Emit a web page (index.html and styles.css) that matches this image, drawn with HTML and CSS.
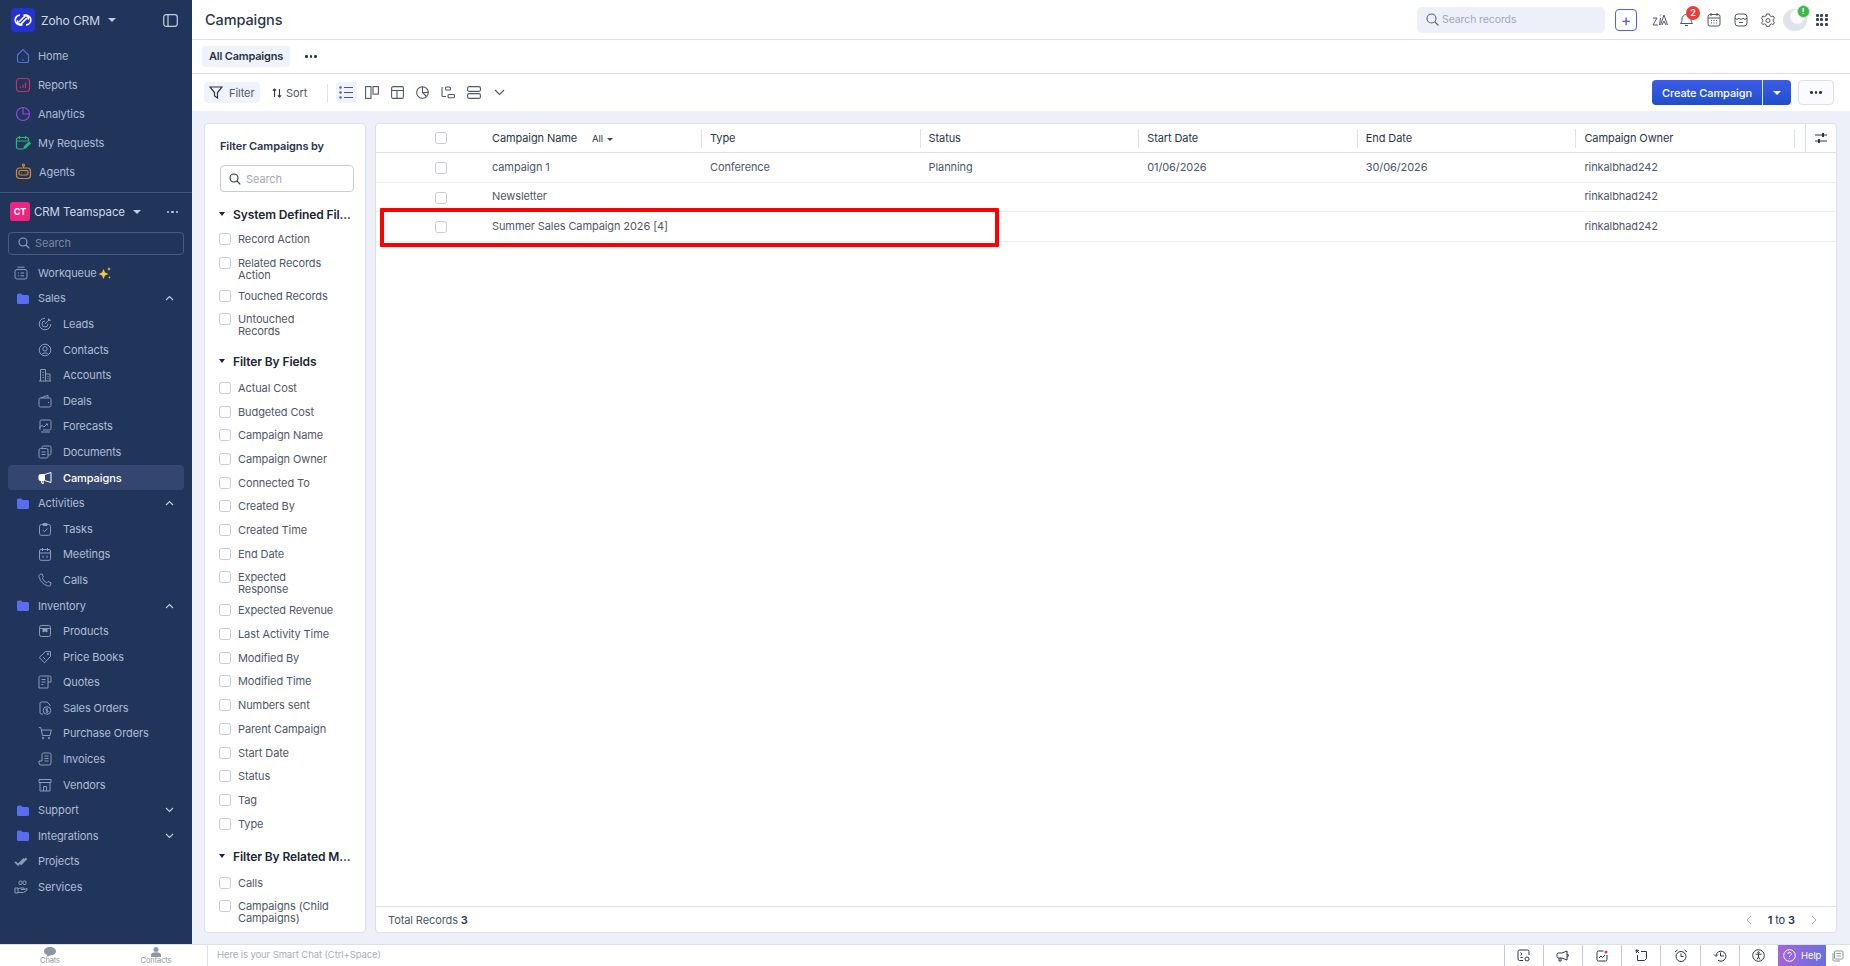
FILE: index.html
```html
<!DOCTYPE html>
<html lang="en">
<head>
  <meta charset="UTF-8" />
  <title>Campaigns - Zoho CRM</title>
  <link rel="stylesheet" href="styles.css">
</head>
<body>
  <div class="app">
    <aside class="sidebar">
      <div class="brand">
        <div class="brand-logo">
          <svg width="20" height="14" viewBox="0 0 20 14" fill="none" stroke="#fff" stroke-width="1.7"><path d="M7 2.2a4.8 4.8 0 1 0 0 9.6h2.5"/><path d="M13 11.8a4.8 4.8 0 1 0 0-9.6h-2.5"/><path d="M6 9l6-6a2.4 2.4 0 0 1 3 3.5"/><path d="M14 5l-6 6a2.4 2.4 0 0 1-3-3.5"/></svg>
        </div>
        <span class="brand-name">Zoho CRM</span>
        <span class="caret caret-side"></span>
        <svg class="brand-panel" width="15" height="13" viewBox="0 0 15 13" fill="none" stroke="#c3cde0" stroke-width="1.2"><rect x=".7" y=".7" width="13.6" height="11.6" rx="2.5"/><path d="M5 .7v11.6"/></svg>
      </div>

      <nav class="nav-top">
        <a class="nav-item"><svg width="16" height="16" viewBox="0 0 16 16" fill="none" stroke="#4f6fe0" stroke-width="1.2"><path d="M2.5 7 8 1.5 13.5 7v5.5a2 2 0 0 1-2 2h-7a2 2 0 0 1-2-2z"/><path d="M7 12h2"/></svg>Home</a>
        <a class="nav-item"><svg width="16" height="16" viewBox="0 0 16 16" fill="none" stroke="#c2306e" stroke-width="1.2"><rect x="1.5" y="1.5" width="13" height="13" rx="3"/><path d="M5.5 11V9.5M8 11V7.5M10.5 11V5.5"/></svg>Reports</a>
        <a class="nav-item"><svg width="16" height="16" viewBox="0 0 16 16" fill="none" stroke="#9a45e0" stroke-width="1.2"><circle cx="8" cy="8" r="6.5"/><path d="M8 1.5V8h6.5"/></svg>Analytics</a>
        <a class="nav-item"><svg width="16" height="16" viewBox="0 0 16 16" fill="none" stroke="#29b57c" stroke-width="1.2"><path d="M8 14H3.5a2 2 0 0 1-2-2V4.5a2 2 0 0 1 2-2h8a2 2 0 0 1 2 2V6"/><path d="M1.5 6h12M4.5 1v3M10.5 1v3"/><path d="m9 13.5.5-2L14 7l1.3 1.3-4.500 4.500z" fill="#29b57c"/></svg>My Requests</a>
        <a class="nav-item"><svg width="17" height="17" viewBox="0 0 17 17" fill="none" stroke="#d48a27" stroke-width="1.2"><rect x="1.5" y="5" width="14" height="10.5" rx="3"/><path d="M8.5 5V3"/><circle cx="8.5" cy="2" r="1"/><rect x="4" y="7.5" width="9" height="4.5" rx="1.5"/><path d="M6.5 9.5v.5M10.5 9.5v.5"/></svg>Agents</a>
      </nav>

      <div class="teamspace">
        <span class="teamspace-badge">CT</span>
        <span class="teamspace-name">CRM Teamspace</span>
        <span class="caret caret-side"></span>
        <span class="dots dots-side"><i></i><i></i><i></i></span>
      </div>

      <div class="side-search">
        <svg width="12" height="12" viewBox="0 0 12 12" fill="none" stroke="#98a6c2" stroke-width="1.1"><circle cx="5" cy="5" r="4"/><path d="m8 8 3.3 3.3"/></svg>
        <span>Search</span>
      </div>

      <nav class="nav-tree">
        <a class="tree-item"><svg class="ic-top" width="14" height="14" viewBox="0 0 14 14"><rect x="1" y="3.5" width="12" height="9.5" rx="2"/><path d="M3.5 1.2h7M4 7h1M6.5 7H10M4 9.8h1M6.5 9.8H10"/></svg><span>Workqueue</span><svg class="sparkle" width="14" height="14" viewBox="0 0 14 14"><path fill="#f5c542" d="M5.5 3 7 6.5 10.5 8 7 9.5 5.5 13 4 9.5.5 8 4 6.5z"/><path fill="#f5c542" d="M11 1l.6 1.4L13 3l-1.4.6L11 5l-.6-1.4L9 3l1.4-.6zM11.5 10l.4 1 1 .4-1 .4-.4 1-.4-1-1-.4 1-.4z"/></svg></a>

        <a class="tree-folder"><svg width="12" height="11" viewBox="0 0 12 11"><path fill="#5a6cf0" d="M0 2A1.5 1.5 0 0 1 1.5.5h2.7L5.5 2h5A1.5 1.5 0 0 1 12 3.5v6a1.500 1.500 0 0 1-1.500 1.500h-9A1.500 1.500 0 0 1 0 9.500z"/></svg><span>Sales</span><svg class="chev" width="9" height="6" viewBox="0 0 9 6"><path d="m1 5 3.5-3.5L8 5"/></svg></a>
        <a class="tree-sub"><svg width="14" height="14" viewBox="0 0 14 14"><path d="M12.8 7A5.800 5.800 0 1 1 7 1.200"/><path d="M10 7a3 3 0 1 1-3-3"/><path d="m7 7 5-5M10.5 1.5v2h2"/></svg>Leads</a>
        <a class="tree-sub"><svg width="14" height="14" viewBox="0 0 14 14"><circle cx="7" cy="7" r="5.8"/><circle cx="7" cy="5.8" r="2.2"/><path d="M3.5 11.5c1-2 6-2 7 0"/></svg>Contacts</a>
        <a class="tree-sub"><svg width="14" height="14" viewBox="0 0 14 14"><path d="M1 13h12M2.5 13V1.500h5V13M7.5 6H12v7M4.3 4.500h1.500M4.300 7h1.500M4.300 9.500h1.500M9.500 8.500h1M9.500 10.500h1"/></svg>Accounts</a>
        <a class="tree-sub"><svg width="14" height="14" viewBox="0 0 14 14"><path d="M2.5 4 10 1.3V4M2.5 4h9A1.500 1.500 0 0 1 13 5.500v6a1.500 1.500 0 0 1-1.500 1.500h-9A1.500 1.500 0 0 1 1 11.500v-6A1.500 1.500 0 0 1 2.500 4zM10 8.500h1"/></svg>Deals</a>
        <a class="tree-sub"><svg width="14" height="14" viewBox="0 0 14 14"><path d="M2 11V2.500A1.500 1.500 0 0 1 3.500 1h8A1.500 1.500 0 0 1 13 2.500v7A1.500 1.500 0 0 1 11.500 11H5M1 9l3-2.500 2 1.500 3-3M8 5h1.500v1.500M3 13h9"/></svg>Forecasts</a>
        <a class="tree-sub"><svg width="14" height="14" viewBox="0 0 14 14"><rect x="1" y="3.5" width="9" height="9.5" rx="1.5"/><path d="M4 3.500v-1A1.500 1.500 0 0 1 5.500 1h6A1.500 1.500 0 0 1 13 2.500v6A1.500 1.500 0 0 1 11.500 10H10M3.500 7h4M3.500 9.500h4"/></svg>Documents</a>
        <a class="tree-sub is-active"><svg width="14" height="14" viewBox="0 0 14 14"><path d="M13 1.500v10l-6.500-2h-4A1.500 1.500 0 0 1 1 8V5a1.500 1.500 0 0 1 1.500-1.500h4z"/><path d="M1.500 4h5v5h-5z" fill="#fff"/><path d="m3 9.500 1 3h1.500l-.7-3"/></svg>Campaigns</a>

        <a class="tree-folder"><svg width="12" height="11" viewBox="0 0 12 11"><path fill="#5a6cf0" d="M0 2A1.5 1.5 0 0 1 1.5.5h2.7L5.5 2h5A1.5 1.5 0 0 1 12 3.5v6a1.500 1.500 0 0 1-1.500 1.500h-9A1.500 1.500 0 0 1 0 9.500z"/></svg><span>Activities</span><svg class="chev" width="9" height="6" viewBox="0 0 9 6"><path d="m1 5 3.5-3.5L8 5"/></svg></a>
        <a class="tree-sub"><svg width="14" height="14" viewBox="0 0 14 14"><rect x="1.5" y="2.5" width="11" height="10.8" rx="2"/><path d="M5 1.500h4v2H5zM4.800 8l1.600 1.700 3-3.200"/></svg>Tasks</a>
        <a class="tree-sub"><svg width="14" height="14" viewBox="0 0 14 14"><rect x="1.5" y="2.5" width="11" height="10.8" rx="1.5"/><path d="M1.500 6h11M4.500 1v3M9.500 1v3M5 8.500V11M9 8.500V11"/></svg>Meetings</a>
        <a class="tree-sub"><svg width="14" height="14" viewBox="0 0 14 14"><path d="M2 1.300 4.200 1l1.300 3-1.300 1.200a9 9 0 0 0 4.600 4.600L10 8.500l3 1.300-.3 2.200C12.500 13 11 13.300 9.500 12.800 5.500 11.500 2.500 8.500 1.200 4.500.7 3 1 2 2 1.300z"/></svg>Calls</a>

        <a class="tree-folder"><svg width="12" height="11" viewBox="0 0 12 11"><path fill="#5a6cf0" d="M0 2A1.5 1.5 0 0 1 1.5.5h2.7L5.5 2h5A1.5 1.5 0 0 1 12 3.5v6a1.500 1.500 0 0 1-1.500 1.500h-9A1.500 1.500 0 0 1 0 9.500z"/></svg><span>Inventory</span><svg class="chev" width="9" height="6" viewBox="0 0 9 6"><path d="m1 5 3.5-3.5L8 5"/></svg></a>
        <a class="tree-sub"><svg width="14" height="14" viewBox="0 0 14 14"><rect x="1.5" y="1.5" width="11" height="11" rx="2"/><path d="M1.500 4.500h11"/><path d="M5 4.500h4V8L7 7 5 8z" fill="#8c9bb9"/></svg>Products</a>
        <a class="tree-sub"><svg width="14" height="14" viewBox="0 0 14 14"><path d="M7.500 1.500h5v5l-6 6.300-5.300-5.300z"/><circle cx="10" cy="4" r=".8"/><path d="m5 7 2.500 2.500"/></svg>Price Books</a>
        <a class="tree-sub"><svg width="14" height="14" viewBox="0 0 14 14"><path d="M10 7h3V2.500A1.500 1.500 0 0 0 11.500 1h-9A1.500 1.500 0 0 0 1 2.500V13h9zM10 2v5M3.500 4.500h4M3.500 7h4M3.500 9.500h2"/></svg>Quotes</a>
        <a class="tree-sub"><svg width="14" height="14" viewBox="0 0 14 14"><path d="M9 1H3.500A1.500 1.500 0 0 0 2 2.500v9A1.500 1.500 0 0 0 3.500 13H5M9 1l3 3v1"/><circle cx="9" cy="9.5" r="3.8"/><path d="M10 8.300c-.5-.6-2.200-.6-2.200.4s2.400.6 2.400 1.700-1.800 1-2.400.4M9 7.300v4.400"/></svg>Sales Orders</a>
        <a class="tree-sub"><svg width="14" height="14" viewBox="0 0 14 14"><path d="M.8 1.500h2l1.700 8H12L13.300 4h-10"/><circle cx="5" cy="12" r=".8"/><circle cx="11" cy="12" r=".8"/></svg>Purchase Orders</a>
        <a class="tree-sub"><svg width="14" height="14" viewBox="0 0 14 14"><path d="M4 9V2.500A1.500 1.500 0 0 1 5.500 1h6A1.500 1.500 0 0 1 13 2.500V11a2 2 0 0 1-2 2H3a2 2 0 0 1-2-2V9zM6.500 4h4M6.500 6.500h4M6.500 9h4"/></svg>Invoices</a>
        <a class="tree-sub"><svg width="14" height="14" viewBox="0 0 14 14"><path d="M1 1.500h12v3H1zM2 4.500V13h10V4.500M5.500 13V8.500h3V13"/></svg>Vendors</a>

        <a class="tree-folder"><svg width="12" height="11" viewBox="0 0 12 11"><path fill="#5a6cf0" d="M0 2A1.5 1.5 0 0 1 1.5.5h2.7L5.5 2h5A1.5 1.5 0 0 1 12 3.5v6a1.500 1.500 0 0 1-1.500 1.500h-9A1.500 1.500 0 0 1 0 9.500z"/></svg><span>Support</span><svg class="chev" width="9" height="6" viewBox="0 0 9 6"><path d="m1 1 3.500 3.500L8 1"/></svg></a>
        <a class="tree-folder"><svg width="12" height="11" viewBox="0 0 12 11"><path fill="#5a6cf0" d="M0 2A1.5 1.5 0 0 1 1.5.5h2.7L5.5 2h5A1.5 1.5 0 0 1 12 3.5v6a1.500 1.500 0 0 1-1.500 1.500h-9A1.500 1.500 0 0 1 0 9.500z"/></svg><span>Integrations</span><svg class="chev" width="9" height="6" viewBox="0 0 9 6"><path d="m1 1 3.500 3.500L8 1"/></svg></a>
        <a class="tree-item"><svg class="ic-top ic-fill" width="14" height="14" viewBox="0 0 14 14"><path d="m.5 8.500 1.300-1.300 2.200 2.200L9.500 4l1.300 1.300L4 12zM6 10l5.800-6.500L13.400 5 7 11.500z"/></svg><span>Projects</span></a>
        <a class="tree-item"><svg class="ic-top" width="14" height="14" viewBox="0 0 14 14"><rect x="5" y="1" width="3" height="3.5" rx="1"/><rect x="9" y="1" width="3" height="3.5" rx="1"/><path d="M1 8h3v5H1zM4 8.500 7 8h3v1.500H7M10 9.500l3-1V10l-3.500 2.500H4"/></svg><span>Services</span></a>
      </nav>
    </aside>

    <main class="main">
      <header class="topbar">
        <h1 class="page-title">Campaigns</h1>
        <div class="top-search">
          <svg width="13" height="13" viewBox="0 0 13 13" fill="none" stroke="#56647f" stroke-width="1.1"><circle cx="5.5" cy="5.5" r="4.5"/><path d="m9 9 3.500 3.500"/></svg>
          <span>Search records</span>
        </div>
        <div class="top-plus">+</div>
        <div class="top-icons">
          <svg width="16" height="14" viewBox="0 0 16 14"><path d="M1 5h4l-4 7h5M7.500 12l1-7M8 2.500l1-1M8.500 12 12 2l3.500 10M10 12l2-4 2 4"/></svg>
          <div class="bell">
            <svg width="15" height="15" viewBox="0 0 15 15"><path d="M1.500 11.500c1-1 1.500-2 1.500-4.500a4.500 4.500 0 0 1 9 0c0 2.500.5 3.500 1.500 4.500zM6 13.500h3"/></svg>
            <span class="bell-count">2</span>
          </div>
          <svg width="14" height="15" viewBox="0 0 14 15"><rect x="1" y="2.5" width="12" height="11.5" rx="2"/><path d="M1 6h12M4 1v3M10 1v3M4 8.500h1M6.500 8.500h1M9 8.500h1M4 11h1M6.500 11h1M9 11h1"/></svg>
          <svg width="14" height="14" viewBox="0 0 14 14"><rect x="1" y="1" width="12" height="12" rx="3"/><path d="M1 5c1 1.800 3 1.800 4 0 .5 1.800 3.500 1.800 4 0 1 1.800 3 1.800 4 0M5 9.500h4"/></svg>
          <svg width="14" height="14" viewBox="0 0 14 14"><path d="M5.500 1h3l.4 1.800 1.500.8 1.800-.6 1.300 2.300-1.400 1.200v1.500l1.400 1.200-1.300 2.300-1.800-.6-1.500.8-.4 1.700h-3l-.4-1.700-1.500-.8-1.800.6L.5 9.700l1.400-1.200V7L.5 5.300 1.800 3l1.800.6 1.500-.8z"/><circle cx="7" cy="7.5" r="2"/></svg>
          <div class="avatar"><span class="avatar-flag">!</span></div>
          <div class="apps"><i></i><i></i><i></i><i></i><i></i><i></i><i></i><i></i><i></i></div>
        </div>
      </header>

      <div class="tabs">
        <span class="tab-active">All Campaigns</span>
        <span class="dots dots-dark"><i></i><i></i><i></i></span>
      </div>

      <div class="toolbar">
        <span class="tool-pill tool-filter">
          <svg width="14" height="13" viewBox="0 0 14 13" fill="none" stroke="#2b3548" stroke-width="1.2"><path d="M1 1h12L8.500 6.500V12l-3-2V6.500z"/></svg>
          Filter
        </span>
        <span class="tool-sort">
          <svg width="10" height="10" viewBox="0 0 10 10" fill="none" stroke="#2b3548" stroke-width="1.1"><path d="M2.500 9V1M.8 2.700 2.500 1l1.700 1.700M7.500 1v8M5.800 7.300 7.500 9l1.700-1.700"/></svg>
          Sort
        </span>
        <span class="tool-sep"></span>
        <div class="views">
          <span class="view is-active"><svg width="14" height="13" viewBox="0 0 14 13" fill="none" stroke="#4b61ee" stroke-width="1.3"><path d="M5 1.500h9M5 6.500h9M5 11.500h9"/><circle cx="1.5" cy="1.5" r="1.3" fill="#4b61ee" stroke="none"/><circle cx="1.5" cy="6.5" r="1.3" fill="#4b61ee" stroke="none"/><circle cx="1.5" cy="11.5" r="1.3" fill="#4b61ee" stroke="none"/></svg></span>
          <span class="view"><svg width="14" height="13" viewBox="0 0 14 13"><rect x=".6" y=".6" width="5.4" height="11.8"/><rect x="8" y=".6" width="5.4" height="7.5"/></svg></span>
          <span class="view"><svg width="13" height="13" viewBox="0 0 13 13"><rect x=".6" y=".6" width="11.8" height="11.8" rx="1.5"/><path d="M.6 4.500h11.800M6 4.500v7.900"/></svg></span>
          <span class="view"><svg width="13" height="13" viewBox="0 0 13 13"><circle cx="6.5" cy="6.5" r="5.8"/><path d="M6.500.7v5.800l4 4M6.500 6.500h5.800"/></svg></span>
          <span class="view"><svg width="14" height="13" viewBox="0 0 14 13"><path d="M1 1v8.500a1 1 0 0 0 1 1h3"/><rect x="4.5" y="1" width="5" height="3" rx="1"/><rect x="7" y="8.5" width="6.5" height="3.3" rx="1"/></svg></span>
          <span class="view"><svg width="14" height="13" viewBox="0 0 14 13"><rect x=".6" y=".6" width="12.8" height="4.8" rx="1.5"/><rect x=".6" y="7.6" width="12.8" height="4.8" rx="1.5"/></svg></span>
          <span class="view"><svg width="11" height="7" viewBox="0 0 11 7"><path d="m1 1 4.500 4.500L10 1"/></svg></span>
        </div>
        <div class="create-group">
          <span class="create-main">Create Campaign</span>
          <span class="create-caret"><span class="caret caret-white"></span></span>
        </div>
        <span class="more-btn"><span class="dots dots-dark"><i></i><i></i><i></i></span></span>
      </div>

      <div class="content">
        <section class="filters">
          <h3 class="filters-title">Filter Campaigns by</h3>
          <div class="filter-search">
            <svg width="12" height="12" viewBox="0 0 12 12" fill="none" stroke="#2b3548" stroke-width="1.1"><circle cx="5" cy="5" r="4"/><path d="m8 8 3.3 3.3"/></svg>
            <span>Search</span>
          </div>

          <h4 class="filter-head"><span class="caret caret-dark"></span>System Defined Fil...</h4>
          <label class="filter-item"><span class="box"></span>Record Action</label>
          <label class="filter-item"><span class="box"></span>Related Records Action</label>
          <label class="filter-item"><span class="box"></span>Touched Records</label>
          <label class="filter-item"><span class="box"></span>Untouched Records</label>

          <h4 class="filter-head"><span class="caret caret-dark"></span>Filter By Fields</h4>
          <label class="filter-item"><span class="box"></span>Actual Cost</label>
          <label class="filter-item"><span class="box"></span>Budgeted Cost</label>
          <label class="filter-item"><span class="box"></span>Campaign Name</label>
          <label class="filter-item"><span class="box"></span>Campaign Owner</label>
          <label class="filter-item"><span class="box"></span>Connected To</label>
          <label class="filter-item"><span class="box"></span>Created By</label>
          <label class="filter-item"><span class="box"></span>Created Time</label>
          <label class="filter-item"><span class="box"></span>End Date</label>
          <label class="filter-item"><span class="box"></span>Expected Response</label>
          <label class="filter-item"><span class="box"></span>Expected Revenue</label>
          <label class="filter-item"><span class="box"></span>Last Activity Time</label>
          <label class="filter-item"><span class="box"></span>Modified By</label>
          <label class="filter-item"><span class="box"></span>Modified Time</label>
          <label class="filter-item"><span class="box"></span>Numbers sent</label>
          <label class="filter-item"><span class="box"></span>Parent Campaign</label>
          <label class="filter-item"><span class="box"></span>Start Date</label>
          <label class="filter-item"><span class="box"></span>Status</label>
          <label class="filter-item"><span class="box"></span>Tag</label>
          <label class="filter-item"><span class="box"></span>Type</label>

          <h4 class="filter-head"><span class="caret caret-dark"></span>Filter By Related M...</h4>
          <label class="filter-item"><span class="box"></span>Calls</label>
          <label class="filter-item"><span class="box"></span>Campaigns (Child Campaigns)</label>
        </section>

        <section class="records">
          <div class="row row-head">
            <div class="cell-check"><span class="box"></span></div>
            <div class="cell-name">Campaign Name <span class="all-pick">All<span class="caret caret-small"></span></span></div>
            <div class="cell">Type</div>
            <div class="cell">Status</div>
            <div class="cell">Start Date</div>
            <div class="cell">End Date</div>
            <div class="cell">Campaign Owner</div>
            <div class="cell cell-end"><svg width="14" height="12" viewBox="0 0 14 12" fill="none" stroke="#2b3548" stroke-width="1.2"><path d="M1 3h12M1 9h12"/><path d="M9 1v4M5 7v4" stroke-width="2"/></svg></div>
          </div>
          <div class="row">
            <div class="cell-check"><span class="box"></span></div>
            <div class="cell-name">campaign 1</div>
            <div class="cell">Conference</div>
            <div class="cell">Planning</div>
            <div class="cell">01/06/2026</div>
            <div class="cell">30/06/2026</div>
            <div class="cell">rinkalbhad242</div>
            <div class="cell"></div>
          </div>
          <div class="row">
            <div class="cell-check"><span class="box"></span></div>
            <div class="cell-name">Newsletter</div>
            <div class="cell"></div>
            <div class="cell"></div>
            <div class="cell"></div>
            <div class="cell"></div>
            <div class="cell">rinkalbhad242</div>
            <div class="cell"></div>
          </div>
          <div class="row">
            <div class="cell-check"><span class="box"></span></div>
            <div class="cell-name">Summer Sales Campaign 2026 [4]</div>
            <div class="cell"></div>
            <div class="cell"></div>
            <div class="cell"></div>
            <div class="cell"></div>
            <div class="cell">rinkalbhad242</div>
            <div class="cell"></div>
          </div>
          <div class="highlight"></div>
          <div class="records-foot">
            <span class="total">Total Records <b>3</b></span>
            <span class="pager">
              <svg width="7" height="10" viewBox="0 0 7 10"><path d="M6 1 2 5l4 4"/></svg>
              <span class="pager-text"><b>1</b> to <b>3</b></span>
              <svg width="7" height="10" viewBox="0 0 7 10"><path d="m1 1 4 4-4 4"/></svg>
            </span>
          </div>
        </section>
      </div>
    </main>
  </div>

  <footer class="bottombar">
    <div class="bottom-tab"><svg width="12" height="10" viewBox="0 0 12 10"><path fill="#8f95a3" d="M6 0c3.300 0 6 1.800 6 4.200S9.300 8.400 6 8.400L2.500 10l.6-2.200C1.200 7.100 0 5.800 0 4.200 0 1.800 2.700 0 6 0z"/></svg><span>Chats</span></div>
    <div class="bottom-tab"><svg width="10" height="10" viewBox="0 0 10 10"><circle cx="5" cy="2.5" r="2.5" fill="#8f95a3"/><path fill="#8f95a3" d="M0 10V8c0-2 2-2.800 5-2.800S10 6 10 8v2z"/></svg><span>Contacts</span></div>
    <div class="smart-chat">Here is your Smart Chat (Ctrl+Space)</div>
    <div class="bottom-tools">
      <span class="tool-cell"><svg width="13" height="13" viewBox="0 0 13 13"><path d="M6 11.500H2.500A1.500 1.500 0 0 1 1 10V2.500A1.500 1.500 0 0 1 2.500 1h8A1.500 1.500 0 0 1 12 2.500V6M3.500 3.500 5 5 3.500 6.500M3.500 8.500h2"/><circle cx="10" cy="10" r="2"/></svg></span>
      <span class="tool-cell"><svg width="14" height="12" viewBox="0 0 14 12"><path d="M11 1v9L6 8H2.500A1.500 1.500 0 0 1 1 6.500v-2A1.500 1.500 0 0 1 2.500 3H6zM3 8v3h2V8M11 4l2 1.500L11 7"/></svg></span>
      <span class="tool-cell"><svg width="12" height="12" viewBox="0 0 12 12"><path d="M7.500 1h-5A1.500 1.500 0 0 0 1 2.500v7A1.500 1.500 0 0 0 2.500 11h7A1.500 1.500 0 0 0 11 9.500V5M3 8l2-2 1.500 1.500L9 5"/><circle cx="10" cy="2" r="1.5" fill="#e53935" stroke="none"/></svg></span>
      <span class="tool-cell"><svg width="13" height="13" viewBox="0 0 13 13"><path d="M6 2.500h5.500v7l-2 2h-7V6"/><path d="m1 1 3 3M1 1l.5 3M1 1l3 .5"/></svg></span>
      <span class="tool-cell"><svg width="14" height="14" viewBox="0 0 14 14"><circle cx="7" cy="7.5" r="5"/><path d="M7 4.500v3h2.500M1 3l2.500-2M13 3l-2.500-2"/></svg></span>
      <span class="tool-cell"><svg width="14" height="13" viewBox="0 0 14 13"><path d="M3 6.500a5 5 0 1 1 2 4.700M7.500 3.500V7H11M1 5.500l2 2 2-2"/></svg></span>
      <span class="tool-cell"><svg width="13" height="13" viewBox="0 0 13 13"><circle cx="6.5" cy="6.5" r="5.8"/><circle cx="6.5" cy="3.5" r=".8"/><path d="M3.500 5.200h6M6.500 5.200V8M6.500 8 5 10.500M6.500 8 8 10.500"/></svg></span>
      <span class="help-btn">
        <svg width="13" height="13" viewBox="0 0 13 13" fill="none" stroke="#fff" stroke-width="1"><circle cx="6.5" cy="6.5" r="5.8"/><path d="M4.800 5a1.700 1.700 0 1 1 2.500 1.500c-.6.400-.8.700-.8 1.300M6.500 9.500v.5"/></svg>
        Help
      </span>
      <span class="tool-last"><svg width="12" height="12" viewBox="0 0 12 12"><rect x="2.5" y="1" width="8.5" height="8" rx="1"/><path d="M1 3v7a1 1 0 0 0 1 1h6M4.500 3.500H9M4.500 6H9"/></svg></span>
    </div>
  </footer>
</body>
</html>
```

FILE: styles.css
```css
:root {
  --navy: #21355a;
  --page: #edf0f9;
  --line: #dcdfec;
  --ink: #2b3548;
  --soft: #4f5868;
  --blue: #4b61ee;
}

* {
  box-sizing: border-box;
}

html, body {
  height: 100%;
}

body {
  margin: 0;
  display: flex;
  flex-direction: column;
  overflow: hidden;
  font-family: Inter, "Noto Sans", sans-serif;
  font-size: 11px;
  letter-spacing: -0.1px;
  color: var(--ink);
  background: var(--page);
}

h1, h3, h4 {
  margin: 0;
}

.app {
  flex: 1;
  display: flex;
  min-height: 0;
}

/* shared bits */

.caret {
  display: inline-block;
  width: 0;
  height: 0;
  border-left: 4px solid transparent;
  border-right: 4px solid transparent;
  border-top: 4px solid #c3cde0;
}

.caret-dark {
  border-left-width: 3.5px;
  border-right-width: 3.5px;
  border-top-color: #1c2433;
}

.caret-white {
  border-top-color: #fff;
}

.caret-small {
  margin-left: 4px;
  border-left-width: 3px;
  border-right-width: 3px;
  border-top: 3px solid #3a4354;
}

.dots {
  display: inline-flex;
  gap: 2px;
}

.dots i {
  width: 2.5px;
  height: 2.5px;
  border-radius: 50%;
  background: #c3cde0;
}

.dots-dark i {
  background: #2b3548;
}

.box {
  display: inline-block;
  flex: none;
  width: 12px;
  height: 12px;
  background: #fff;
  border: 1px solid #c8cad8;
  border-radius: 2.5px;
}

/* sidebar */

.sidebar {
  flex: none;
  width: 192px;
  background: var(--navy);
  color: #aebbd6;
}

.brand {
  display: flex;
  align-items: center;
  height: 40px;
  padding: 0 14px 0 11px;
}

.brand-logo {
  display: flex;
  align-items: center;
  justify-content: center;
  width: 24px;
  height: 24px;
  background: #2433cf;
  border-radius: 4px;
}

.brand-name {
  margin: 0 8px 0 6px;
  font-size: 12px;
  color: #ced7e8;
}

.brand-panel {
  margin-left: auto;
}

.nav-top {
  padding: 2px 0 6px;
  border-bottom: 1px solid #46587c;
}

.nav-item {
  display: flex;
  align-items: center;
  gap: 7px;
  height: 28.8px;
  padding-left: 15px;
}

.teamspace {
  display: flex;
  align-items: center;
  height: 34px;
  margin-top: 2px;
  padding: 0 14px 0 10px;
}

.teamspace-badge {
  display: flex;
  align-items: center;
  justify-content: center;
  width: 20px;
  height: 19px;
  font-size: 9px;
  font-weight: 700;
  color: #fff;
  background: #f0237f;
  border-radius: 3px;
}

.teamspace-name {
  margin: 0 8px 0 4px;
  font-size: 11.5px;
  color: #ced7e8;
}

.dots-side {
  margin-left: auto;
}

.side-search {
  display: flex;
  align-items: center;
  gap: 5px;
  height: 23px;
  margin: 3px 8px 5px;
  padding-left: 9px;
  color: #77869f;
  border: 1px solid #4a5b80;
  border-radius: 4px;
  font-size: 11px;
}

.tree-item, .tree-folder, .tree-sub {
  display: flex;
  align-items: center;
  height: 25.6px;
}

.tree-item {
  padding-left: 14px;
}

.tree-item .ic-top {
  margin-right: 10px;
}

.tree-item svg, .tree-sub svg {
  fill: none;
  stroke: #8c9bb9;
  stroke-width: 1;
}

.tree-item svg.ic-fill {
  fill: #8c9bb9;
  stroke: none;
}

.tree-item svg.sparkle {
  margin-left: 1px;
  stroke: none;
}

.tree-folder {
  padding-left: 17px;
  padding-right: 18px;
}

.tree-folder span {
  margin-left: 9px;
}

.chev {
  margin-left: auto;
  fill: none;
  stroke: #c3cde0;
  stroke-width: 1.1;
}

.tree-sub {
  gap: 11px;
  margin: 0 8px;
  padding-left: 30px;
  border-radius: 4px;
}

.tree-sub.is-active {
  color: #fff;
  font-weight: 500;
  background: #34456f;
}

.tree-sub.is-active svg {
  stroke: #fff;
}

/* main area */

.main {
  flex: 1;
  display: flex;
  flex-direction: column;
  min-width: 0;
}

.topbar {
  display: flex;
  align-items: center;
  flex: none;
  height: 40px;
  padding: 0 15px 0 13px;
  background: #fff;
  border-bottom: 1px solid var(--line);
}

.page-title {
  margin-right: auto;
  font-size: 14.5px;
  font-weight: 500;
  color: var(--ink);
}

.top-search {
  display: flex;
  align-items: center;
  gap: 3px;
  width: 188px;
  height: 26px;
  padding-left: 9px;
  color: #a2a9ba;
  background: var(--page);
  border-radius: 5px;
  font-size: 10.5px;
}

.top-plus {
  display: flex;
  align-items: center;
  justify-content: center;
  width: 22px;
  height: 22px;
  margin: 0 9px 0 10px;
  font-size: 16px;
  color: var(--blue);
  border: 1px solid var(--blue);
  border-radius: 4px;
}

.top-icons {
  display: grid;
  grid-auto-flow: column;
  grid-auto-columns: 27px;
  align-items: center;
  justify-items: center;
}

.top-icons svg {
  fill: none;
  stroke: #4f5868;
  stroke-width: 1;
}

.bell {
  position: relative;
  display: flex;
}

.bell-count {
  position: absolute;
  top: -6px;
  left: 7px;
  width: 14px;
  height: 14px;
  line-height: 14px;
  text-align: center;
  font-size: 9px;
  font-weight: 600;
  color: #fff;
  background: #ec3b3b;
  border-radius: 50%;
}

.avatar {
  position: relative;
  width: 24px;
  height: 22px;
  background: radial-gradient(circle at 60% 35%, #fff 0 6px, #dfe3ec 8px);
  border-radius: 50%;
}

.avatar-flag {
  position: absolute;
  top: -4px;
  right: -3px;
  width: 13px;
  height: 13px;
  line-height: 11px;
  text-align: center;
  font-size: 8px;
  font-weight: 700;
  color: #fff;
  background: #3cb94a;
  border: 1px solid #bdeac2;
  border-radius: 50%;
}

.apps {
  display: grid;
  grid-template-columns: repeat(3, 3px);
  gap: 1.5px;
}

.apps i {
  width: 3px;
  height: 3px;
  background: #3a4354;
  border-radius: 1px;
}

.tabs {
  display: flex;
  align-items: center;
  flex: none;
  height: 34px;
  padding-left: 10px;
  background: #fff;
  border-bottom: 1px solid var(--line);
}

.tab-active {
  padding: 4px 7px;
  height: 21px;
  font-size: 11px;
  font-weight: 600;
  letter-spacing: -0.2px;
  line-height: 13px;
  background: #eff3fb;
  border-radius: 4px;
}

.tabs .dots {
  margin-left: 15px;
}

.toolbar {
  display: flex;
  align-items: center;
  flex: none;
  height: 37px;
  padding: 0 16px 0 12px;
  background: #fff;
}

.tool-pill {
  display: flex;
  align-items: center;
  gap: 6px;
  height: 21px;
  padding: 0 5px;
  color: var(--soft);
  background: #eff3fb;
  border-radius: 4px;
}

.tool-filter {
  width: 56px;
}

.tool-sort {
  display: flex;
  align-items: center;
  gap: 4px;
  margin-left: 12px;
  color: var(--soft);
}

.tool-sep {
  width: 1px;
  height: 18px;
  margin: 0 8px 0 19.5px;
  background: var(--line);
}

.views {
  display: flex;
  align-items: center;
  gap: 4.5px;
}

.view {
  display: flex;
  align-items: center;
  justify-content: center;
  width: 21px;
  height: 21px;
  border-radius: 4px;
}

.view svg {
  fill: none;
  stroke: #4f5868;
  stroke-width: 1.1;
}

.view.is-active {
  background: #eff3fb;
}

.create-group {
  display: flex;
  margin-left: auto;
  height: 25px;
  color: #fff;
  background: linear-gradient(#3f5ce8, #1d4fc9);
  border-radius: 4px;
}

.create-main {
  display: flex;
  align-items: center;
  justify-content: center;
  width: 111px;
  font-weight: 500;
  border-right: 1px solid #dce3f8;
}

.create-caret {
  display: flex;
  align-items: center;
  justify-content: center;
  width: 28px;
}

.more-btn {
  display: flex;
  align-items: center;
  justify-content: center;
  width: 36px;
  height: 25px;
  margin-left: 7px;
  background: #fbfbfe;
  border: 1px solid var(--line);
  border-radius: 4px;
}

.content {
  flex: 1;
  display: flex;
  gap: 9px;
  min-height: 0;
  padding: 12px 13px 11px 12px;
}

/* filter column */

.filters {
  flex: none;
  width: 162px;
  padding: 15px 12px 0 14px;
  overflow: hidden;
  background: #fff;
  border: 1px solid var(--line);
  border-radius: 4px;
}

.filters-title {
  padding-left: 1px;
  font-size: 11px;
  font-weight: 600;
  line-height: 14px;
}

.filter-search {
  display: flex;
  align-items: center;
  gap: 5px;
  width: 134px;
  height: 27px;
  margin: 12px 0 0 1px;
  padding-left: 8px;
  font-size: 11px;
  color: #a2a9ba;
  border: 1px solid #c8cad8;
  border-radius: 4px;
}

.filter-head {
  display: flex;
  align-items: center;
  gap: 8px;
  height: 16px;
  margin: 14px 0 11px;
  font-size: 12px;
  font-weight: 600;
  color: #1c2433;
  white-space: nowrap;
}

.filter-item {
  display: flex;
  gap: 7px;
  min-height: 23.7px;
  padding-bottom: 9px;
  padding-right: 17px;
  line-height: 12px;
  color: var(--soft);
}

.filter-item + .filter-head {
  margin: 7px 0 12.5px;
}

/* records table */

.records {
  position: relative;
  flex: 1;
  display: flex;
  flex-direction: column;
  min-width: 0;
  background: #fff;
  border: 1px solid var(--line);
  border-radius: 4px;
}

.row {
  display: grid;
  grid-template-columns: 116px 209px repeat(5, 218.6px) 1fr;
  align-items: center;
  height: 29.5px;
  color: var(--soft);
  border-bottom: 1px solid #eceef5;
}

.row-head {
  height: 29px;
  color: var(--ink);
  border-bottom-color: var(--line);
}

.cell-check {
  display: flex;
  justify-content: center;
  padding: 2px 0 0 14px;
}

.row-head .cell-check {
  padding-top: 0;
}

.cell {
  padding-left: 9px;
  white-space: nowrap;
}

.cell-name, .cell {
  padding-bottom: 1px;
}

.row-head .cell {
  height: 19px;
  padding: 0 0 0 8px;
  line-height: 18px;
  border-left: 1px solid var(--line);
}

.row-head .cell-end {
  position: relative;
  display: flex;
  align-items: center;
  justify-content: flex-end;
  padding-right: 8px;
}

.row-head .cell-end::before {
  content: "";
  position: absolute;
  top: -5px;
  bottom: -5px;
  left: 10px;
  border-left: 1px solid var(--line);
}

.all-pick {
  margin-left: 12px;
  font-size: 9.5px;
  color: var(--ink);
}

.all-pick .caret {
  vertical-align: 1px;
}

.highlight {
  position: absolute;
  top: 84px;
  left: 4px;
  width: 619px;
  height: 39px;
  border: 4px solid #f00;
  border-radius: 1px;
}

.records-foot {
  display: flex;
  align-items: center;
  justify-content: space-between;
  height: 26px;
  margin-top: auto;
  padding: 0 18px 0 12px;
  border-top: 1px solid var(--line);
}

.total {
  color: var(--soft);
}

.total b, .pager-text b {
  font-weight: 600;
  color: var(--ink);
}

.pager {
  display: flex;
  align-items: center;
  gap: 16px;
}

.pager svg {
  fill: none;
  stroke: #a2a9ba;
  stroke-width: 1;
}

/* bottom bar */

.bottombar {
  display: flex;
  align-items: stretch;
  flex: none;
  height: 22px;
  background: #fff;
  border-top: 1px solid var(--line);
}

.bottom-tab {
  display: flex;
  flex-direction: column;
  align-items: center;
  width: 100px;
  padding-top: 2px;
  font-size: 7.5px;
  line-height: 8px;
  color: #8f95a3;
}

.bottom-tab + .bottom-tab {
  width: 108px;
  padding-left: 5px;
  border-right: 1px solid var(--line);
}

.smart-chat {
  flex: 1;
  padding-left: 9px;
  font-size: 9.5px;
  line-height: 20px;
  color: #a9aebb;
}

.bottom-tools {
  display: flex;
  align-items: stretch;
}

.tool-cell {
  display: flex;
  align-items: center;
  justify-content: center;
  width: 39.2px;
  border-left: 1px solid #c8cad8;
}

.tool-cell svg, .tool-last svg {
  fill: none;
  stroke: #2b3548;
  stroke-width: 1;
}

.help-btn {
  display: flex;
  align-items: center;
  gap: 5px;
  width: 48px;
  padding-left: 5px;
  font-size: 9.5px;
  color: #fff;
  background: linear-gradient(90deg, #a463dc, #6a6fe0);
}

.tool-last {
  display: flex;
  align-items: center;
  width: 24px;
  padding-left: 6px;
}

.tool-last svg {
  stroke: #8f95a3;
}
```
